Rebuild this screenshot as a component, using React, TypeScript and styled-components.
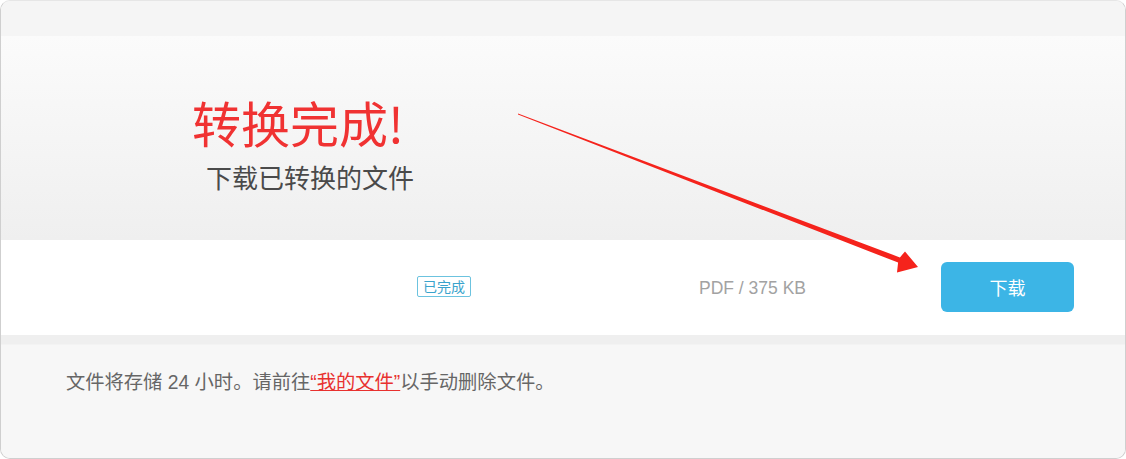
import styled, { createGlobalStyle } from "styled-components";

const GlobalStyle = createGlobalStyle`
    html, body {
        margin: 0;
        padding: 0;
        background: #ffffff;
    }
    body {
        font-family: "Noto Sans CJK SC", "Noto Sans", sans-serif;
    }
`;

const Card = styled.div`
    position: relative;
    width: 1126px;
    height: 459px;
    box-sizing: border-box;
    border: 1px solid #cfcfcf;
    border-top-color: #e6e6e6;
    border-radius: 10px;
    overflow: hidden;
    display: flex;
    flex-direction: column;
    background: #f7f7f7;
`;

const TopStrip = styled.div`
    height: 35px;
    background: #f5f5f5;
`;

const Hero = styled.div`
    height: 204px;
    box-sizing: border-box;
    padding: 56px 0 0 191px;
    background: linear-gradient(#fbfbfb, #efefef);
    display: flex;
    flex-direction: column;
`;

const Title = styled.h1`
    margin: 0;
    font-size: 49px;
    line-height: 60px;
    font-weight: 400;
    color: #f03232;
`;

const Bang = styled.span`
    margin-left: 0;
`;

const Subtitle = styled.p`
    margin: 8px 0 0 14px;
    font-size: 26px;
    line-height: 34px;
    color: #4a4a4a;
`;

const FileRow = styled.div`
    height: 95px;
    background: #ffffff;
    display: flex;
    align-items: center;
    padding-right: 50px;
`;

const NameCell = styled.div`
    flex: 0 0 416px;
`;

const StatusCell = styled.div`
    flex: 0 0 282px;
    display: flex;
    align-items: center;
`;

const Badge = styled.span`
    display: inline-block;
    box-sizing: border-box;
    height: 21px;
    padding: 0 5px;
    border: 1px solid #6cc3df;
    border-radius: 2px;
    font-size: 14px;
    line-height: 19px;
    color: #3aa3cc;
    margin-top: -2px;
`;

const SizeCell = styled.div`
    flex: 0 0 242px;
    font-family: "Liberation Sans", Arial, sans-serif;
    font-size: 17.5px;
    color: #a2a2a2;
    margin-top: 2px;
`;

const DownloadButton = styled.button`
    width: 133px;
    height: 50px;
    border: none;
    border-radius: 6px;
    background: #3cb5e6;
    color: #ffffff;
    font-family: "Noto Sans CJK SC", sans-serif;
    font-size: 18px;
    cursor: pointer;
    margin-top: -2px;
`;

const Footer = styled.div`
    flex: 1;
    background: linear-gradient(#efefef 0, #efefef 9px, #f7f7f7 10px);
    padding: 32px 0 0 65px;
    font-family: "Liberation Sans", "Noto Sans CJK SC", sans-serif;
    font-size: 19.3px;
    color: #666666;
`;

const FileLink = styled.a`
    color: #e8312f;
    text-decoration: underline;
`;

const Annotation = styled.svg`
    position: absolute;
    left: 0;
    top: 0;
    pointer-events: none;
`;

export default function App() {
    return (
        <>
            <GlobalStyle />
            <Card>
                <TopStrip />
                <Hero>
                    <Title>
                        转换完成<Bang>!</Bang>
                    </Title>
                    <Subtitle>下载已转换的文件</Subtitle>
                </Hero>
                <FileRow>
                    <NameCell />
                    <StatusCell>
                        <Badge>已完成</Badge>
                    </StatusCell>
                    <SizeCell>PDF / 375 KB</SizeCell>
                    <DownloadButton>下载</DownloadButton>
                </FileRow>
                <Footer>
                    文件将存储 24 小时。请前往<FileLink href="#">“我的文件”</FileLink>以手动删除文件。
                </Footer>
                <Annotation width="1126" height="459" viewBox="0 0 1126 459">
                    <path
                        d="M517 112.4 L898.9 256.4 L904 250.5 L917 266 L896 271.5 L897.1 261.6 L517 113.6 Z"
                        fill="#f5231c"
                    />
                </Annotation>
            </Card>
        </>
    );
}
